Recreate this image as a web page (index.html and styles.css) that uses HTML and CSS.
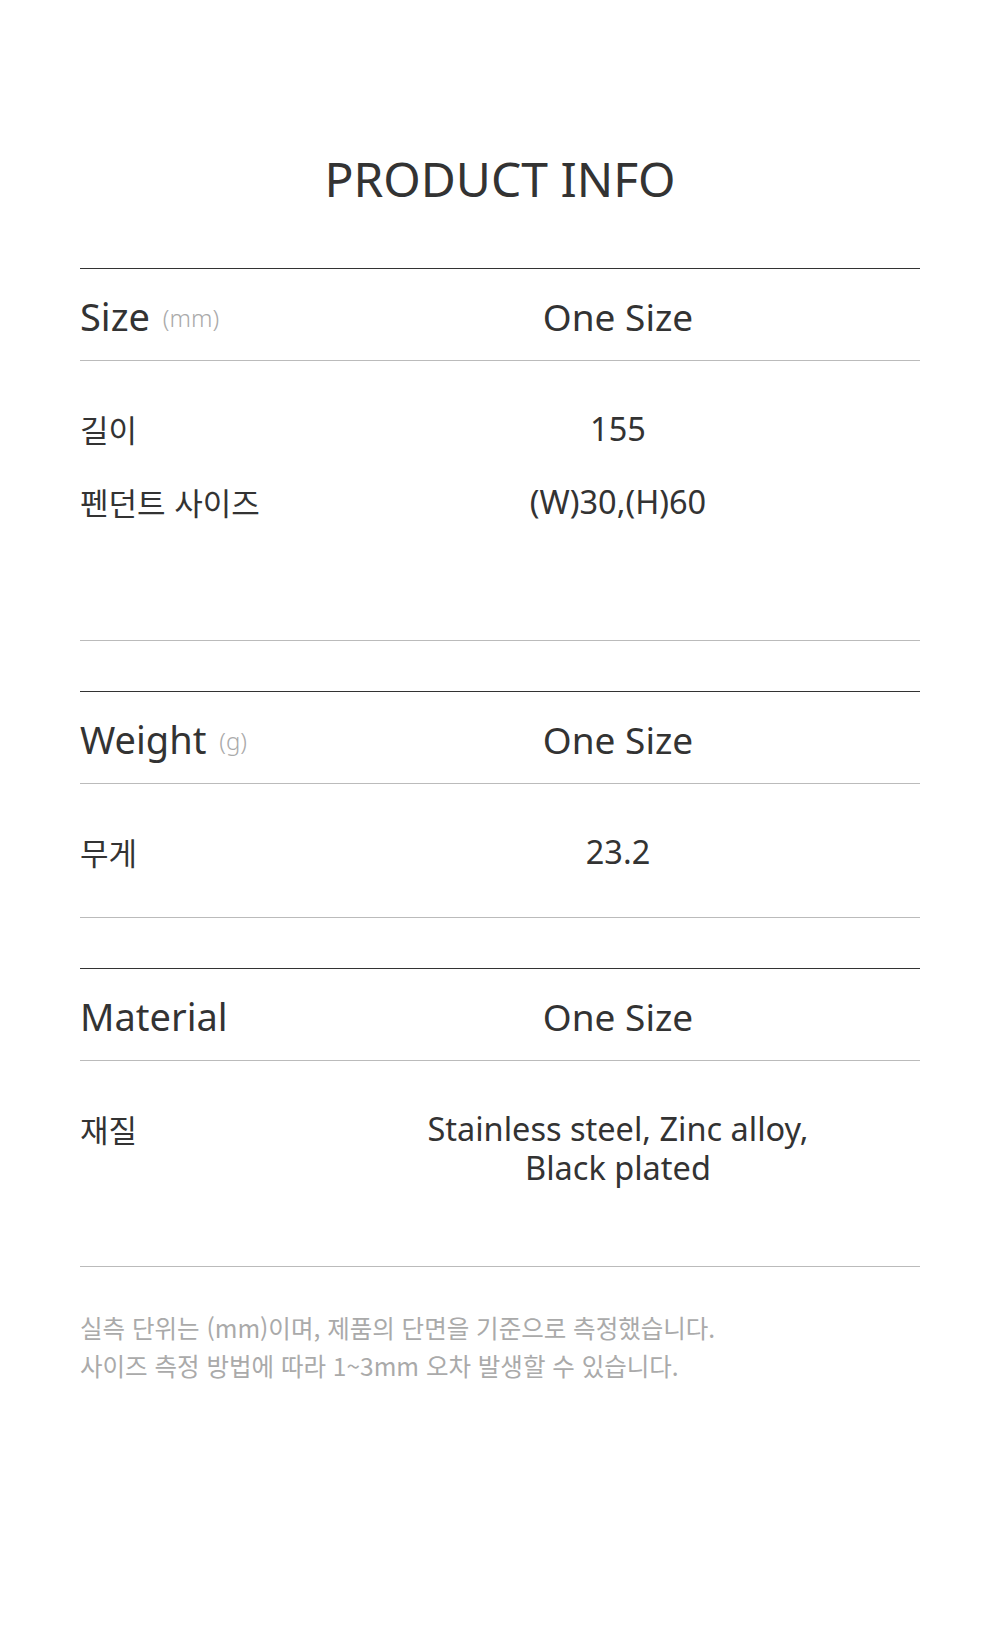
FILE: index.html
```html
<!DOCTYPE html>
<html lang="ko">
<head>
<meta charset="utf-8">
<title>Product Info</title>
<link rel="stylesheet" href="styles.css">
</head>
<body>
<main class="page">
  <h1 class="title">PRODUCT INFO</h1>

  <section class="spec spec--size">
    <div class="spec-head">
      <div class="spec-name">Size <span class="unit">(mm)</span></div>
      <div class="spec-col">One Size</div>
    </div>
    <div class="spec-body">
      <div class="row"><div class="label">길이</div><div class="value">155</div></div>
      <div class="row"><div class="label">펜던트 사이즈</div><div class="value">(W)30,(H)60</div></div>
      <div class="row"><div class="label">&nbsp;</div><div class="value">&nbsp;</div></div>
    </div>
  </section>

  <section class="spec spec--weight">
    <div class="spec-head">
      <div class="spec-name">Weight <span class="unit">(g)</span></div>
      <div class="spec-col">One Size</div>
    </div>
    <div class="spec-body">
      <div class="row"><div class="label">무게</div><div class="value">23.2</div></div>
    </div>
  </section>

  <section class="spec spec--material">
    <div class="spec-head">
      <div class="spec-name">Material</div>
      <div class="spec-col">One Size</div>
    </div>
    <div class="spec-body">
      <div class="row"><div class="label">재질</div><div class="value">Stainless steel, Zinc alloy,<br>Black plated</div></div>
    </div>
  </section>

  <p class="note">실측 단위는 (mm)이며, 제품의 단면을 기준으로 측정했습니다.<br>사이즈 측정 방법에 따라 1~3mm 오차 발생할 수 있습니다.</p>
</main>
</body>
</html>
```

FILE: styles.css
```css
html, body {
  margin: 0;
  padding: 0;
  background: #ffffff;
}

body {
  font-family: "Noto Sans", "Noto Sans CJK KR", sans-serif;
  color: #333333;
}

.page {
  width: 840px;
  margin: 0 auto;
  padding: 149px 0 200px;
}

.title {
  margin: 0 0 59px;
  font-size: 48px;
  line-height: 60px;
  font-weight: 400;
  text-align: center;
  color: #333333;
  letter-spacing: 0;
}

.spec {
  border-top: 1px solid #333333;
  border-bottom: 1px solid #bbbbbb;
  margin-bottom: 50px;
}

.spec--material {
  margin-bottom: 42px;
}

.spec-head {
  display: grid;
  grid-template-columns: 236px 1fr;
  align-items: center;
  height: 92px;
  box-sizing: border-box;
  padding: 4px 0 0;
  border-bottom: 1px solid #bbbbbb;
  font-size: 37px;
  line-height: 45px;
}

.spec-name {
  font-size: 38px;
  color: #333333;
}

.unit {
  font-size: 24px;
  line-height: 0;
  margin-left: 3px;
  color: #aaaaaa;
  font-weight: 300;
  vertical-align: 4px;
}

.spec-col {
  text-align: center;
}

.spec-body {
  padding: 31px 0 29px;
}

.spec--material .spec-body {
  padding-bottom: 62px;
}

.row {
  display: grid;
  grid-template-columns: 236px 1fr;
  align-items: start;
  padding: 17px 0;
  line-height: 39px;
}

.label {
  font-family: "Noto Sans CJK KR", "Noto Sans", sans-serif;
  font-size: 31px;
  color: #333333;
  white-space: nowrap;
}

.value {
  font-size: 32.5px;
  text-align: center;
  color: #333333;
}

.note {
  margin: 0;
  font-family: "Noto Sans CJK KR", "Noto Sans", sans-serif;
  font-size: 24.5px;
  line-height: 38px;
  color: #aaaaaa;
  letter-spacing: 0;
}
```
